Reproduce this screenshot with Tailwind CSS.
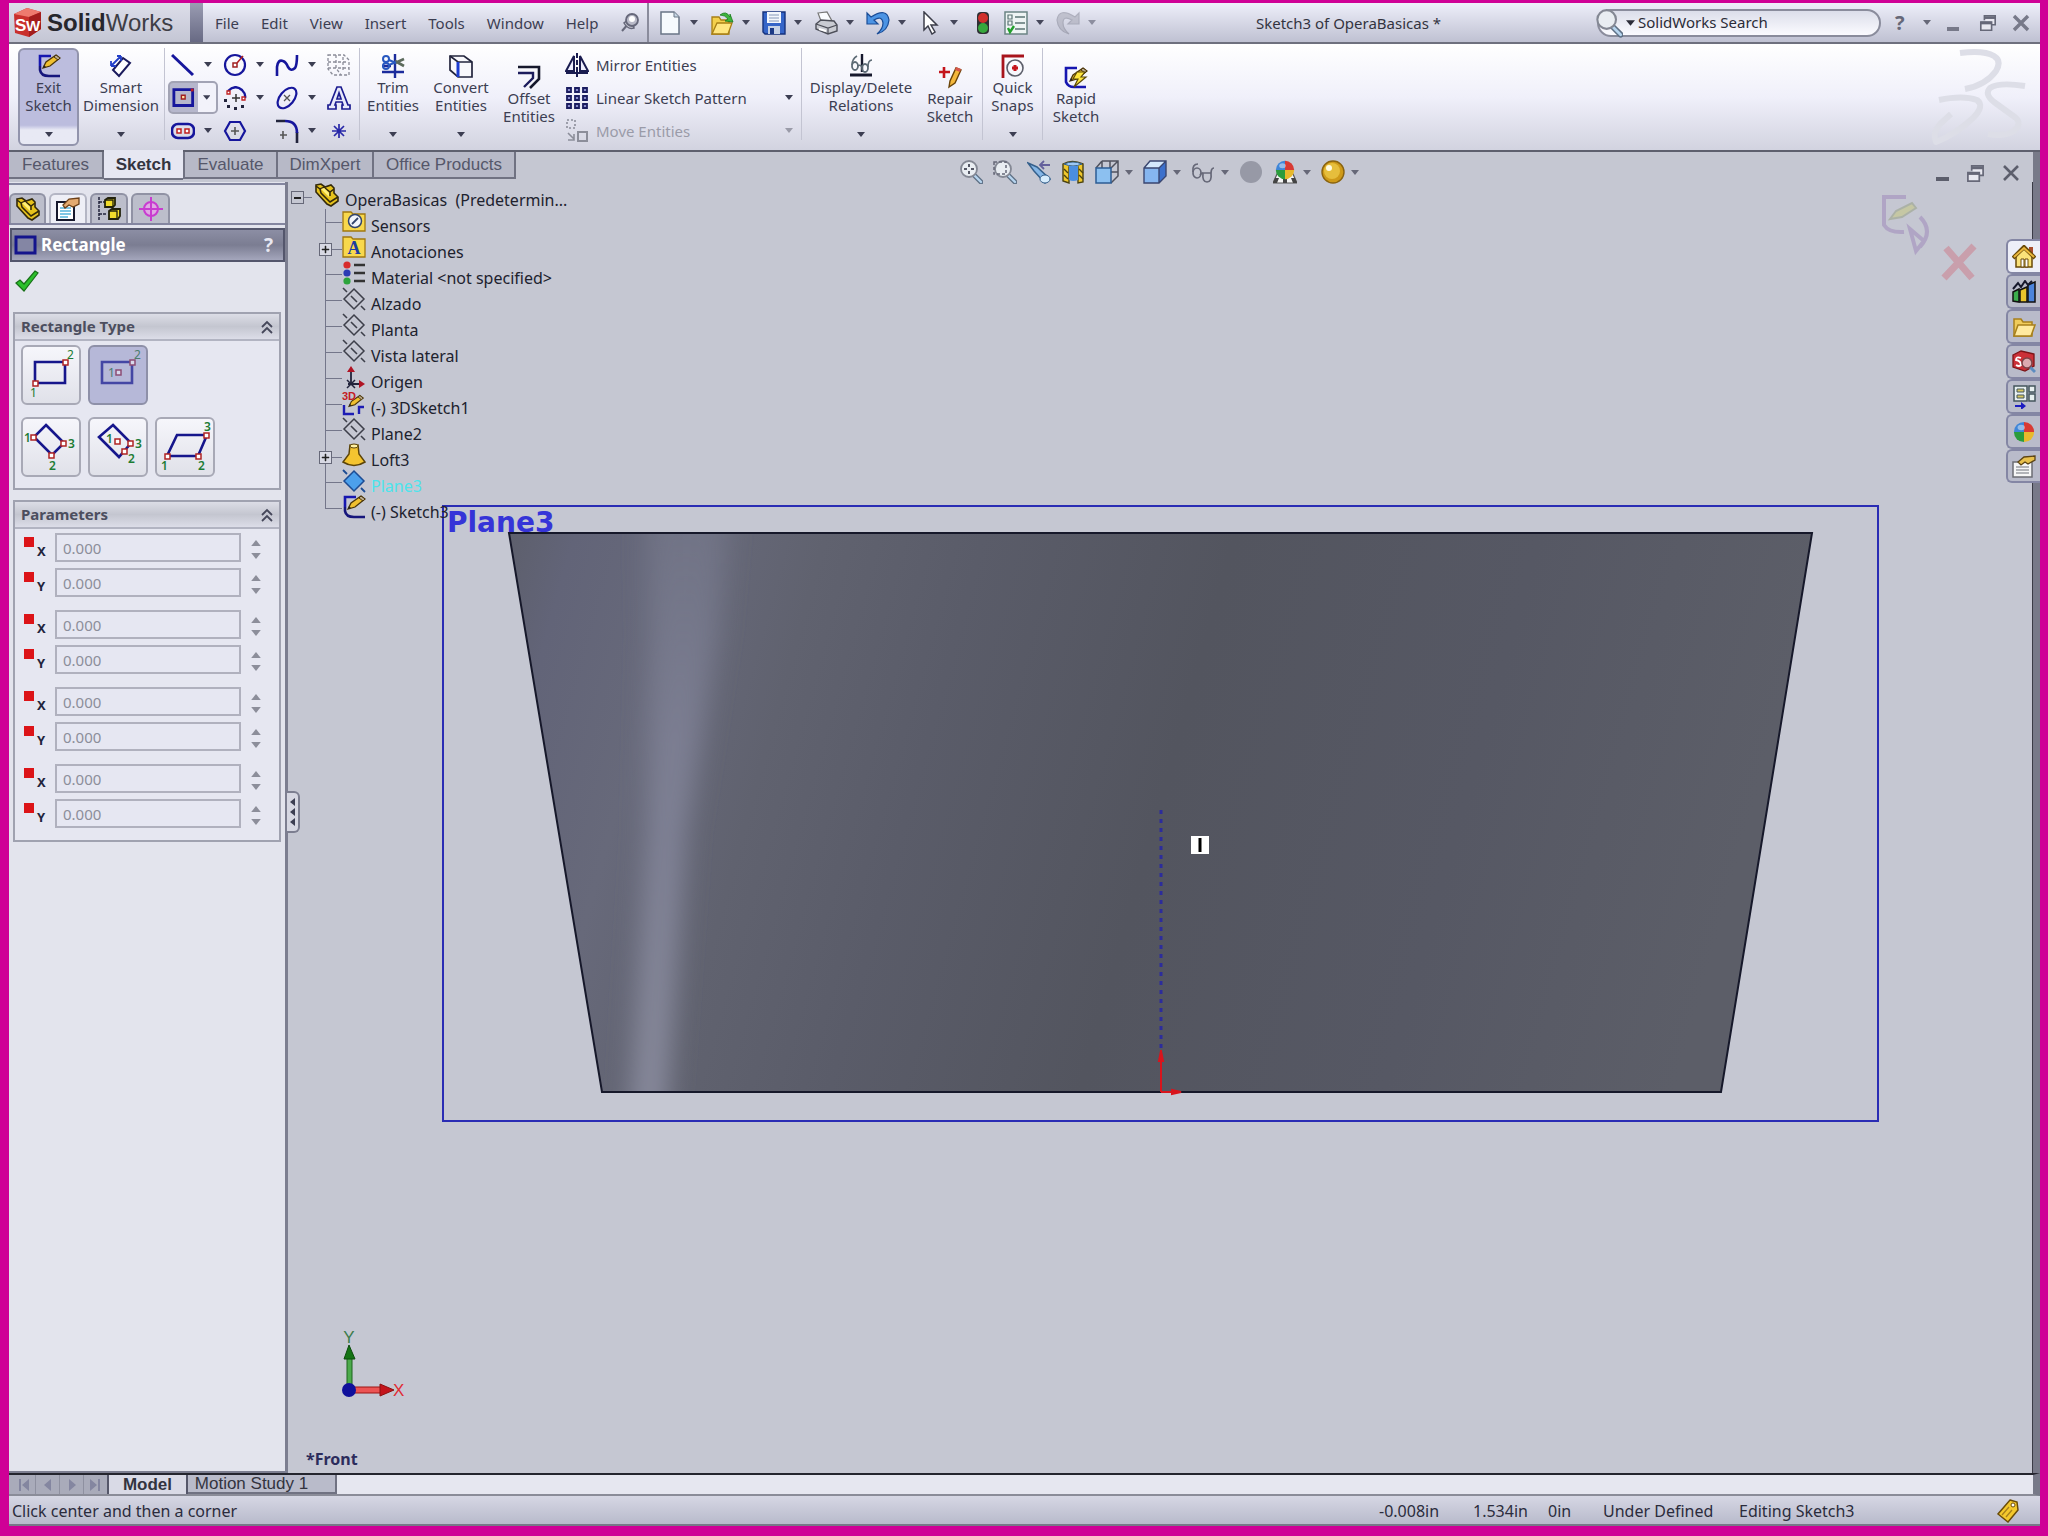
<!DOCTYPE html>
<html lang="en">
<head>
    <meta charset="UTF-8">
    <meta name="viewport" content="width=device-width, initial-scale=1.0">
    <title>SolidWorks - Sketch3 of OperaBasicas</title>
    <script src="https://cdn.jsdelivr.net/npm/@tailwindcss/browser@4"></script>
</head>
<body class="h-screen flex flex-col overflow-hidden bg-[#cf0096] pt-[3px] pl-[9px] pr-2 pb-[10px] font-['Noto_Sans',sans-serif] text-[15px] text-[#3c3e52] whitespace-nowrap">

    <!-- Shared symbols -->
    <svg class="hidden">
        <symbol id="arrow" viewBox="0 0 8 5"><path d="M0 0h8L4 5z" fill="currentColor"/></symbol>
        <symbol id="pencil" viewBox="0 0 24 24"><path d="M6 16l3-6L19 3l4 3-10 8z" fill="#f0c030" stroke="#4a3508" stroke-width="1.3"/><path d="M17 5l2-2 4 3-2 2z" fill="#b9a98e" stroke="#4a3508"/><path d="M6 16l1-3 2 2z" fill="#222"/></symbol>
        <symbol id="sketch" viewBox="0 0 24 24"><path d="M14 2H3v10" fill="none" stroke="#1616b0" stroke-width="2.6"/><path d="M3 12v4q1 6 9 6h11" fill="none" stroke="#16167c" stroke-width="2.6"/><use href="#pencil" y="-2"/></symbol>
        <symbol id="part" viewBox="0 0 24 24"><path d="M1 2l5-1 4 3 6-2 3 3v5l4 4v4l-7 5-4-2L1 9z" fill="#e6c21c" stroke="#33290a" stroke-width="1.6"/><path d="M1 3l4 3 5-2M5 6l1 4 9 9 8-5M10 5l5 4 4-3M15 9v4" fill="none" stroke="#33290a" stroke-width="1.5"/><path d="M6 6l3-1 5 5v4z" fill="#fff07a"/></symbol>
        <symbol id="plane" viewBox="0 0 24 24"><path d="M12 2l10 10-10 10L2 12z" fill="none" stroke="#3d3f4a" stroke-width="1.5"/><path d="M1 1l4 4M9 9l6 6M19 19l4 4" stroke="#3d3f4a" stroke-width="1.6"/></symbol>
        <symbol id="chevrons" viewBox="0 0 12 14"><path d="M1 7l5-5 5 5M1 13l5-5 5 5" fill="none" stroke="#45475a" stroke-width="1.8"/></symbol>
        <symbol id="lens" viewBox="0 0 24 24"><path d="M15 15l7 7" stroke="#5e7085" stroke-width="5" stroke-linecap="round"/><path d="M15 15l7 7" stroke="#b6d4ee" stroke-width="2.4" stroke-linecap="round"/><circle cx="10" cy="9" r="8" fill="#e9edf2" stroke="#848894" stroke-width="1.8"/></symbol>
        <symbol id="restore" viewBox="0 0 20 20"><path d="M6 7V2h12v10h-4" fill="#e8e8f0" stroke="#666878" stroke-width="1.8"/><path d="M6 4h12" stroke="#666878" stroke-width="3"/><path d="M2 9h12v9H2z" fill="#e8e8f0" stroke="#666878" stroke-width="1.8"/><path d="M2 10h12" stroke="#666878" stroke-width="3"/></symbol>
        <symbol id="ball" viewBox="0 0 24 24"><path d="M12 12V1A11 11 0 0 0 1 12z" fill="#3f86d8"/><path d="M12 12h11A11 11 0 0 0 12 1z" fill="#d83a34"/><path d="M12 12H1a11 11 0 0 0 11 11z" fill="#2b9c3c"/><path d="M12 12v11a11 11 0 0 0 11-11z" fill="#e8b92c"/><ellipse cx="9" cy="7" rx="4" ry="3" fill="#fff" opacity=".45"/></symbol>
    </svg>

    <!-- Title bar -->
    <header class="h-[41px] shrink-0 flex items-center border-b-2 border-[#6e707e] bg-linear-to-b from-[#eeeffa] to-[#bfc1d2]">
        <div class="w-[181px] h-full flex items-center gap-1 pl-[3px] bg-linear-to-b from-[#dddeea] to-[#c4c6d4]">
            <svg class="size-[31px]" viewBox="0 0 31 31">
                <path d="M2 7l13-6 14 4v17l-12 8-14-4z" fill="#c9302c"/><path d="M2 7l13-6 14 4-12 5z" fill="#ee7a6e"/><path d="M17 10l12-5v17l-12 8z" fill="#a31d1d"/>
                <text x="3" y="24" font-family="Liberation Sans" font-weight="700" font-size="17" fill="#fff">S</text><text x="14" y="24" font-family="Liberation Sans" font-weight="700" font-size="15" fill="#fff">W</text>
            </svg>
            <h1 class="font-['Liberation_Sans',sans-serif] text-[24px] leading-7 text-[#3e3e46]"><b class="text-[#26262c]">Solid</b>Works</h1>
        </div>
        <div class="w-[13px] h-full bg-linear-to-b from-[#9a9cb2] to-[#686a84]"></div>
        <nav class="h-full w-[446px] flex items-center gap-[22px] pl-3 pt-px border-r-2 border-[#8a8c9c]">
            <button>File</button>
            <button>Edit</button>
            <button>View</button>
            <button>Insert</button>
            <button>Tools</button>
            <button>Window</button>
            <button>Help</button>
            <button aria-label="Pin menu"><svg class="size-5" viewBox="0 0 20 20"><path d="M9 10L2 18" stroke="#66687a" stroke-width="2"/><path d="M4 10q4 7 10 5l-1-4-5-4z" fill="#cfd0da" stroke="#66687a" stroke-width="1.5"/><circle cx="12" cy="7" r="6" fill="#b9bac8" stroke="#66687a" stroke-width="1.8"/><circle cx="12" cy="6" r="3" fill="#fff"/></svg></button>
        </nav>

        <!-- Quick access -->
        <div class="flex items-center pl-[9px] text-[#45475a]">
            <button class="w-[52px] flex items-center gap-2" aria-label="New"><svg class="size-6" viewBox="0 0 24 24"><path d="M3 1h13l5 5v17H3z" fill="#f6fafd" stroke="#6a7686" stroke-width="1.5"/><path d="M16 1v5h5" fill="#c6d6e4" stroke="#6a7686"/></svg><svg class="w-2 h-[5px]"><use href="#arrow"/></svg></button>
            <button class="w-[52px] flex items-center gap-2" aria-label="Open"><svg class="size-6" viewBox="0 0 24 24"><path d="M2 23V6h7l2 3h8v14z" fill="#f4d04c" stroke="#a87f14" stroke-width="1.3"/><path d="M2 23l5-11h15l-4 11z" fill="#ffe680" stroke="#a87f14" stroke-width="1.3"/><path d="M10 4q6-5 10 2V3l3 8-8-1 3-2q-3-4-8-4z" fill="#3cb43c" stroke="#187a1c" stroke-width=".8"/></svg><svg class="w-2 h-[5px]"><use href="#arrow"/></svg></button>
            <button class="w-[52px] flex items-center gap-2" aria-label="Save"><svg class="size-6" viewBox="0 0 24 24"><path d="M1 1h22v22H3l-2-2z" fill="#3565c8" stroke="#16327c" stroke-width="1.4"/><path d="M5 1h14v11H5z" fill="#f3f7fc"/><path d="M7 4h10M7 7h10M7 10h10" stroke="#8698b8"/><path d="M6 15h12v8H6z" fill="#c6d2e6"/><path d="M8 17h4v6H8z" fill="#1c3a86"/></svg><svg class="w-2 h-[5px]"><use href="#arrow"/></svg></button>
            <button class="w-[52px] flex items-center gap-2" aria-label="Print"><svg class="size-6" viewBox="0 0 24 24"><path d="M4 2l9-1 5 9H7z" fill="#fafcff" stroke="#777" stroke-width="1.2"/><path d="M2 13l5-4 13 1 3 4v6l-9 3L2 18z" fill="#c9cbd2" stroke="#4c4e58" stroke-width="1.4"/><path d="M2 13l12 4 9-3M14 17v6" fill="none" stroke="#4c4e58" stroke-width="1.2"/><path d="M5 18l7 2" stroke="#fff" stroke-width="2"/></svg><svg class="w-2 h-[5px]"><use href="#arrow"/></svg></button>
            <button class="w-[52px] flex items-center gap-2" aria-label="Undo"><svg class="size-6" viewBox="0 0 24 24"><path d="M1 2v11h11l-4-4q8-5 9 3 0 6-6 11 11-3 12-14Q21-4 5 6z" fill="#4c94e4" stroke="#1a4c96" stroke-width="1.2"/></svg><svg class="w-2 h-[5px]"><use href="#arrow"/></svg></button>
            <button class="w-[57px] flex items-center gap-2" aria-label="Select"><svg class="size-6" viewBox="0 0 24 24"><path d="M6 1v18l4-4 4 8 3-2-4-7h6z" fill="#fff" stroke="#3c3e4a" stroke-width="1.5"/></svg><svg class="w-2 h-[5px]"><use href="#arrow"/></svg></button>
            <button class="w-[29px]" aria-label="Rebuild"><svg class="w-4 h-6" viewBox="0 0 16 24"><rect x="2" y="1" width="12" height="22" rx="4" fill="#2e3034"/><circle cx="8" cy="7" r="5" fill="#d0302c"/><circle cx="8" cy="17" r="5" fill="#36a83c"/></svg></button>
            <button class="w-[52px] flex items-center gap-2" aria-label="Options"><svg class="size-6" viewBox="0 0 24 24"><path d="M1 1h22v22H1z" fill="#eef4f4" stroke="#6b8484" stroke-width="1.5"/><path d="M4 4h4v4H4zM4 10h4v4H4z" fill="none" stroke="#5c7474" stroke-width="1.2"/><path d="M11 6h10M11 12h10M11 18h10" stroke="#5c7474" stroke-width="1.6"/><path d="M4 17l2 4 4-6" fill="none" stroke="#22a02c" stroke-width="2.4"/></svg><svg class="w-2 h-[5px]"><use href="#arrow"/></svg></button>
            <button class="w-[52px] flex items-center gap-2 opacity-50" aria-label="Redo"><svg class="size-6" viewBox="0 0 24 24"><path d="M23 2v11H12l4-4q-9-5-9 3 0 6 6 11-11-3-12-14Q3-4 19 6z" fill="#a2a3b0" stroke="#7f8190" stroke-width="1.2"/></svg><svg class="w-2 h-[5px]"><use href="#arrow"/></svg></button>
        </div>

        <p class="flex-1 pt-px pr-2 text-center text-[#33343f]">Sketch3 of OperaBasicas *</p>

        <form class="w-[284px] h-[28px] flex items-center gap-[3px] mr-[14px] pl-2 rounded-full border-2 border-[#8a8c9c] bg-linear-to-b from-[#dcdeea] to-[#fbfbff] text-[#2b2c38]">
            <svg class="w-7 h-8 -ml-3"><use href="#lens"/></svg>
            <svg class="w-[9px] h-[6px]"><use href="#arrow"/></svg>
            <input type="text" aria-label="Search" value="SolidWorks Search" class="flex-1 min-w-0 bg-transparent outline-none">
        </form>
        <div class="flex items-center text-[#666878] pr-[10px]">
            <button class="w-[28px] text-left font-bold text-[20px] leading-6">?</button>
            <svg class="w-2 h-[5px] mr-[16px]"><use href="#arrow"/></svg>
            <button class="w-[32px] h-5" aria-label="Minimize"><span class="block w-3 h-[4px] mt-3 bg-[#777989]"></span></button>
            <button class="w-[33px]" aria-label="Restore"><svg class="size-[18px]"><use href="#restore"/></svg></button>
            <button aria-label="Close"><svg class="size-[18px]" viewBox="0 0 18 18"><path d="M2 2l14 14M16 2L2 16" stroke="#777989" stroke-width="3.4"/></svg></button>
        </div>
    </header>

    <!-- Command manager -->
    <section class="h-[108px] shrink-0 flex pt-1 pl-[9px] border-b-2 border-[#5e606e] bg-linear-to-b from-white via-[#f0f0fa] to-[#d2d3e0] text-center leading-[18px]">
        <button class="w-[61px] h-[98px] flex flex-col items-center pt-1 rounded-md border-2 border-[#9294ac] bg-linear-to-b from-[#bcbdde] from-80% to-[#e8e9f4] to-85%">
            <svg class="size-6"><use href="#sketch"/></svg>
            <span class="h-[54px]">Exit<br>Sketch</span>
            <svg class="w-2 h-[5px]"><use href="#arrow"/></svg>
        </button>
        <button class="w-[84px] h-[98px] flex flex-col items-center pt-[6px] mr-px">
            <svg class="size-6" viewBox="0 0 24 24"><path d="M14 4l7 5-11 13-6-6z" fill="#fff" stroke="#1a1a5c" stroke-width="2"/><path d="M2 12L12 2M2 12V7M2 12h5M12 2v5M12 2H8" fill="none" stroke="#2440c8" stroke-width="1.8"/></svg>
            <span class="h-[54px]">Smart<br>Dimension</span>
            <svg class="w-2 h-[5px]"><use href="#arrow"/></svg>
        </button>
        <div class="w-px h-[92px] bg-[#c3c4d2] mr-[3px]"></div>

        <div class="grid grid-cols-[52px_52px_52px_30px] auto-rows-[33px] mr-[5px]">
            <button class="flex items-center" aria-label="Line"><svg class="size-6 mx-[3px]" viewBox="0 0 24 24"><path d="M1 2l21 20" stroke="#16169c" stroke-width="3"/></svg><svg class="w-2 h-[5px] mx-[6px]"><use href="#arrow"/></svg></button>
            <button class="flex items-center" aria-label="Circle"><svg class="size-6 mx-[3px]" viewBox="0 0 24 24"><circle cx="12" cy="12" r="10" fill="none" stroke="#16169c" stroke-width="2.2"/><path d="M10 10h4v4h-4z" fill="#fff" stroke="#a02020" stroke-width="1.5"/><path d="M14 10l6-7" stroke="#b02020" stroke-width="1.5"/></svg><svg class="w-2 h-[5px] mx-[6px]"><use href="#arrow"/></svg></button>
            <button class="flex items-center" aria-label="Spline"><svg class="size-6 mx-[3px]" viewBox="0 0 24 24"><path d="M2 23V14q1-8 6-6 3 1 5 6 3 5 7 1 2-3 2-13" fill="none" stroke="#16169c" stroke-width="2.6"/></svg><svg class="w-2 h-[5px] mx-[6px]"><use href="#arrow"/></svg></button>
            <button class="flex items-center justify-center" aria-label="Plane"><svg class="size-6" viewBox="0 0 24 24"><path d="M1 2h16l5 5v15H6l-5-6zM1 9h19M9 2v13l5 7M16 4v14M1 15h21" fill="none" stroke="#8a8c98" stroke-width="1.3" stroke-dasharray="3 2"/></svg></button>

            <button class="flex items-center rounded-[5px] border-2 border-[#a2a3b4] bg-linear-to-r from-[#b6b7cc] from-60% to-[#f2f2fa] to-60% mr-[2px]" aria-label="Rectangle"><svg class="size-6 mx-[2px]" viewBox="0 0 24 24"><path d="M2 3h20v17H2z" fill="none" stroke="#16169c" stroke-width="3"/><path d="M10 9h4v4h-4z" fill="#ffe0a0" stroke="#a02020" stroke-width="1.5"/><path d="M20 2h3v3h-3z" fill="#c02020"/></svg><svg class="w-2 h-[5px] mx-[6px]"><use href="#arrow"/></svg></button>
            <button class="flex items-center" aria-label="Arc"><svg class="size-6 mx-[3px]" viewBox="0 0 24 24"><path d="M5 5q7-7 14-1 4 4 3 8" fill="none" stroke="#16169c" stroke-width="2.4"/><path d="M4 5h3v3H4zM19 11h3v3h-3z" fill="#fff" stroke="#c02020" stroke-width="1.3"/><path d="M9 12h8M13 8v8" stroke="#333" stroke-width="1.5"/><path d="M1 13h3v3H1zM4 19h3v3H4zM11 21h3v3h-3zM18 19h3v3h-3z" fill="#22243c"/></svg><svg class="w-2 h-[5px] mx-[6px]"><use href="#arrow"/></svg></button>
            <button class="flex items-center" aria-label="Ellipse"><svg class="size-6 mx-[3px]" viewBox="0 0 24 24"><ellipse cx="12" cy="12" rx="12" ry="7" transform="rotate(-50 12 12)" fill="none" stroke="#16169c" stroke-width="2.2"/><path d="M9 9l6 6M15 9l-6 6" stroke="#555" stroke-width="1.3"/></svg><svg class="w-2 h-[5px] mx-[6px]"><use href="#arrow"/></svg></button>
            <button class="flex items-center justify-center" aria-label="Text"><svg class="size-6" viewBox="0 0 24 24"><path d="M10 1h4l7 18h2v4h-8v-4h1l-1-3H9l-1 3h1v4H1v-4h2zM12 7l-2 6h4z" fill="#e9eafa" stroke="#1c1c90" stroke-width="1.7"/></svg></button>

            <button class="flex items-center" aria-label="Slot"><svg class="size-6 mx-[3px]" viewBox="0 0 24 24"><rect x="1" y="5" width="22" height="14" rx="6" fill="none" stroke="#16169c" stroke-width="2.6"/><path d="M6 10h4v4H6zM14 10h4v4h-4z" fill="#fff" stroke="#c02020" stroke-width="1.5"/></svg><svg class="w-2 h-[5px] mx-[6px]"><use href="#arrow"/></svg></button>
            <button class="flex items-center" aria-label="Polygon"><svg class="size-6 mx-[3px]" viewBox="0 0 24 24"><path d="M7 3h10l5 9-5 9H7l-5-9z" fill="none" stroke="#16169c" stroke-width="2.2"/><path d="M8 12h8M12 8v8" stroke="#555" stroke-width="1.6"/></svg></button>
            <button class="flex items-center" aria-label="Fillet"><svg class="size-6 mx-[3px]" viewBox="0 0 24 24"><path d="M1 2h9M22 13v11" stroke="#22243c" stroke-width="2.6"/><path d="M10 2q12 0 12 12" fill="none" stroke="#16169c" stroke-width="2.6"/><path d="M5 16h7M8 12v8" stroke="#555" stroke-width="1.6"/></svg><svg class="w-2 h-[5px] mx-[6px]"><use href="#arrow"/></svg></button>
            <button class="flex items-center justify-center" aria-label="Point"><svg class="size-4" viewBox="0 0 16 16"><path d="M8 1v14M1 8h14M3 3l10 10M13 3L3 13" stroke="#2828a8" stroke-width="1.7"/></svg></button>
        </div>
        <div class="w-px h-[92px] bg-[#c3c4d2]"></div>

        <button class="w-[66px] h-[98px] flex flex-col items-center pt-[6px]">
            <svg class="size-6" viewBox="0 0 24 24"><path d="M14 0v24M1 18h22M1 12h9" stroke="#1c2c9c" stroke-width="2.4"/><path d="M14 9l9-4M14 7l9 5" stroke="#5c6a5c" stroke-width="2.6"/><circle cx="5" cy="5" r="3" fill="none" stroke="#2858c0" stroke-width="2"/><circle cx="5" cy="12" r="3" fill="none" stroke="#2858c0" stroke-width="2"/><path d="M8 6l7 3M8 11l7-3" stroke="#2858c0" stroke-width="2"/></svg>
            <span class="h-[54px]">Trim<br>Entities</span>
            <svg class="w-2 h-[5px]"><use href="#arrow"/></svg>
        </button>
        <button class="w-[70px] h-[98px] flex flex-col items-center pt-[6px]">
            <svg class="size-6" viewBox="0 0 24 24"><path d="M1 2h14l8 6v15H9l-8-7z" fill="#f8f8fc" stroke="#22243c" stroke-width="1.7"/><path d="M1 2l8 6h14" fill="none" stroke="#22243c" stroke-width="1.7"/><path d="M9 8v15" stroke="#1c3cd0" stroke-width="3"/></svg>
            <span class="h-[54px]">Convert<br>Entities</span>
            <svg class="w-2 h-[5px]"><use href="#arrow"/></svg>
        </button>
        <button class="w-[66px] h-[98px] flex flex-col items-center pt-[17px]">
            <svg class="size-6" viewBox="0 0 24 24"><path d="M1 2h21v12l-9 9" fill="none" stroke="#16182c" stroke-width="2.6"/><path d="M1 8h15v5l-9 9" fill="none" stroke="#1c1c5c" stroke-width="2.4"/></svg>
            <span>Offset<br>Entities</span>
        </button>

        <div class="w-[239px] grid auto-rows-[33px] pl-[3px]">
            <button class="flex items-center gap-[7px]"><svg class="size-6" viewBox="0 0 24 24"><path d="M9 3v15H1zM15 3v15h8z" fill="#eef" stroke="#1a1c50" stroke-width="2"/><path d="M12 0v24" stroke="#1a1c50" stroke-width="2" stroke-dasharray="5 2"/><path d="M1 20h22" stroke="#1a1c50" stroke-width="2"/></svg>Mirror Entities</button>
            <button class="flex items-center gap-[7px]"><svg class="size-6" viewBox="0 0 24 24"><path d="M2 2h4v4H2zM10 2h4v4h-4zM18 2h4v4h-4zM2 10h4v4H2zM10 10h4v4h-4zM18 10h4v4h-4zM2 18h4v4H2zM10 18h4v4h-4zM18 18h4v4h-4z" fill="#8a8ccc" stroke="#1a1c60" stroke-width="1.8"/></svg><span class="flex-1 text-left">Linear Sketch Pattern</span><svg class="w-2 h-[5px] mr-2"><use href="#arrow"/></svg></button>
            <button class="flex items-center gap-[7px] text-[#9a9ba8]" disabled><svg class="size-6" viewBox="0 0 24 24"><path d="M2 1h8v8H2z" fill="none" stroke="#8c8e9a" stroke-width="1.6" stroke-dasharray="2 2"/><path d="M13 13h9v9h-9z" fill="none" stroke="#8c8e9a" stroke-width="2"/><path d="M3 14l6 6M9 15v6H3" fill="none" stroke="#8c8e9a" stroke-width="1.6"/></svg><span class="flex-1 text-left">Move Entities</span><svg class="w-2 h-[5px] mr-2"><use href="#arrow"/></svg></button>
        </div>
        <div class="w-px h-[92px] bg-[#c3c4d2]"></div>

        <button class="w-[118px] h-[98px] flex flex-col items-center pt-[6px]">
            <svg class="size-6" viewBox="0 0 24 24"><path d="M13 0v18" stroke="#16182c" stroke-width="2.4"/><path d="M1 21h22" stroke="#16182c" stroke-width="3"/><ellipse cx="6" cy="12" rx="3" ry="4" fill="none" stroke="#5c6a74" stroke-width="1.8"/><ellipse cx="16" cy="14" rx="3" ry="4" fill="none" stroke="#5c6a74" stroke-width="1.8"/><path d="M3 11q0-6 5-9M9 12q2-2 4 1M19 13q0-7 4-7" fill="none" stroke="#5c6a74" stroke-width="1.6"/></svg>
            <span class="h-[54px]">Display/Delete<br>Relations</span>
            <svg class="w-2 h-[5px]"><use href="#arrow"/></svg>
        </button>
        <button class="w-[60px] h-[98px] flex flex-col items-center pt-[17px]">
            <svg class="size-6" viewBox="0 0 24 24"><path d="M1 7h11M6 2v11" stroke="#c4141c" stroke-width="2.6"/><path d="M11 22l1-6L18 3l5 2-6 13z" fill="#f4b83c" stroke="#6a4408" stroke-width="1.4"/><path d="M17 5l1-3 5 2-1 3z" fill="#d8584c"/></svg>
            <span>Repair<br>Sketch</span>
        </button>
        <div class="w-px h-[92px] bg-[#c3c4d2] ml-[2px]"></div>
        <button class="w-[59px] h-[98px] flex flex-col items-center pt-[6px]">
            <svg class="size-6" viewBox="0 0 24 24"><path d="M2 24V2h21" fill="none" stroke="#a8141c" stroke-width="2.8"/><circle cx="14" cy="14" r="8" fill="none" stroke="#5c5e6a" stroke-width="1.6"/><path d="M11 14h6M14 11v6" stroke="#c4141c" stroke-width="3"/></svg>
            <span class="h-[54px]">Quick<br>Snaps</span>
            <svg class="w-2 h-[5px]"><use href="#arrow"/></svg>
        </button>
        <div class="w-px h-[92px] bg-[#c3c4d2]"></div>
        <button class="w-[66px] h-[98px] flex flex-col items-center pt-[17px]">
            <svg class="size-6" viewBox="0 0 24 24"><path d="M13 3H2v14q2 5 8 5h12" fill="none" stroke="#1616b0" stroke-width="2.6"/><use href="#pencil"/><path d="M13 7h8l-4 5h5L10 22l4-8H9z" fill="#ffe63c" stroke="#5c4a08" stroke-width="1.2"/></svg>
            <span>Rapid<br>Sketch</span>
        </button>
        <svg class="w-[100px] h-[100px] ml-auto mr-[12px]" viewBox="0 0 100 100" fill="none" stroke="#dddee7" stroke-width="6" stroke-linejoin="round">
            <path d="M32 5q24-3 34 3 8 5 2 15-10 14-31 18"/><path d="M11 52q24-5 38 0 8 6-4 18Q28 86 8 94q-4-8 4-18l11-10"/><path d="M97 38q-26-4-35 2-6 6 4 14l22 16q6 6-2 13-10 6-26 3"/>
        </svg>
    </section>

    <!-- Command tabs and heads-up view toolbar -->
    <section class="h-[30px] shrink-0 flex items-start relative z-20 border-r-[7px] border-[#777988] bg-[#c5c7d2]">
        <nav class="flex font-['Liberation_Sans',sans-serif] text-[17px] leading-[25px] text-[#55576a]">
            <button class="w-[95px] h-[27px] border-r-2 border-b-2 border-[#707282] bg-[#b7b9c7]">Features</button>
            <button class="w-[79px] h-[30px] -mt-[2px] border-b-2 border-[#707282] bg-[#e6e7f2] font-bold text-[#33343f]">Sketch</button>
            <button class="w-[95px] h-[27px] border-x-2 border-b-2 border-[#707282] bg-[#b7b9c7]">Evaluate</button>
            <button class="w-[96px] h-[27px] border-r-2 border-b-2 border-[#707282] bg-[#b7b9c7]">DimXpert</button>
            <button class="w-[142px] h-[27px] border-r-2 border-b-2 border-[#707282] bg-[#b7b9c7]">Office Products</button>
        </nav>
        <div class="flex-1 flex items-center justify-center gap-[10px] pt-2 pr-[134px] text-[#666878]">
            <button aria-label="Zoom to fit"><svg class="size-6" viewBox="0 0 24 24"><use href="#lens"/><path d="M10 4v10M5 9h10" stroke="#555866" stroke-width="2" stroke-dasharray="3 4"/></svg></button>
            <button aria-label="Zoom to area"><svg class="size-6" viewBox="0 0 24 24"><use href="#lens"/><path d="M1 2h12v12H1z" fill="none" stroke="#666878" stroke-width="1.5" stroke-dasharray="3 2"/></svg></button>
            <button aria-label="Previous view"><svg class="size-6" viewBox="0 0 24 24"><path d="M1 3l9 4 13 12-5 4L7 11z" fill="#84b6e6" stroke="#35608c" stroke-width="1.5"/><ellipse cx="18" cy="19" rx="5" ry="4" fill="#d6ecfc" stroke="#35608c"/><path d="M23 5h-9M17 1l-4 4 4 4" fill="none" stroke="#64609c" stroke-width="1.8"/></svg></button>
            <button aria-label="Section view"><svg class="size-6" viewBox="0 0 24 24"><path d="M2 4q9-5 20 0v18l-5 1V7H8v16l-6-2z" fill="#f0c82c" stroke="#4a4210" stroke-width="1.4"/><path d="M3 4q9-4 18 0-9 4-18 0z" fill="#9cc8f4" stroke="#35608c"/><path d="M8 6h9v14q-5 2-9 0z" fill="#4a8ee0"/><path d="M3 9l4 4M3 15l4 4M18 9l4 4M18 15l4 4" stroke="#4a4210" stroke-width="1.4"/></svg></button>
            <button class="flex items-center gap-[6px]" aria-label="View orientation"><svg class="size-6" viewBox="0 0 24 24"><path d="M7 1h16v15l-7 7M7 1L1 8M23 1l-7 7M15 1v7M7 1v7M16 12h7" fill="none" stroke="#50525e" stroke-width="1.5"/><path d="M1 8h15v15H1z" fill="#8cc0f0" stroke="#2c5c94" stroke-width="1.5"/></svg><svg class="w-2 h-[5px]"><use href="#arrow"/></svg></button>
            <button class="flex items-center gap-[6px]" aria-label="Display style"><svg class="size-6" viewBox="0 0 24 24"><path d="M1 8l6-7h16l-7 7z" fill="#d4e8fc"/><path d="M1 8h15v15H1z" fill="#86b6f0"/><path d="M16 8l7-7v15l-7 7z" fill="#3c70cc"/><path d="M1 8l6-7h16v15l-7 7H1zM1 8h15v15M16 8l7-7" fill="none" stroke="#3a4670" stroke-width="1.4"/></svg><svg class="w-2 h-[5px]"><use href="#arrow"/></svg></button>
            <button class="flex items-center gap-[6px]" aria-label="Hide/show items"><svg class="size-6" viewBox="0 0 24 24" fill="none" stroke="#666878" stroke-width="1.7"><ellipse cx="6" cy="13" rx="4" ry="5"/><path d="M12 13h8q1 9-4 9t-4-9zM2 12q-1-8 5-8M9 15q2-3 3-1M20 14q0-6 3-6"/></svg><svg class="w-2 h-[5px]"><use href="#arrow"/></svg></button>
            <button aria-label="Shadows"><svg class="size-6" viewBox="0 0 24 24"><circle cx="12" cy="12" r="11" fill="#9799a6"/></svg></button>
            <button class="flex items-center gap-[6px]" aria-label="Apply scene"><svg class="size-6" viewBox="0 0 24 24"><path d="M4 14h16l4 9H0z" fill="#f4f4f4" stroke="#555" stroke-width="1.2"/><path d="M2 18h4l-2 5H0zM10 18h4v5h-4zM18 18h4l2 5h-4z" fill="#444"/><svg x="2" y="0" width="20" height="20"><use href="#ball"/></svg></svg><svg class="w-2 h-[5px]"><use href="#arrow"/></svg></button>
            <button class="flex items-center gap-[6px]" aria-label="Appearance"><svg class="size-6" viewBox="0 0 24 24"><circle cx="12" cy="12" r="11" fill="#cf9a18" stroke="#8a6410" stroke-width="1.4"/><circle cx="11" cy="11" r="8" fill="#e6be3c"/><circle cx="8" cy="8" r="3" fill="#fffbe0"/></svg><svg class="w-2 h-[5px]"><use href="#arrow"/></svg></button>
        </div>
        <div class="flex items-center pt-[11px] pr-[13px]">
            <button class="w-[30px] h-5" aria-label="Minimize document"><span class="block w-[13px] h-[4px] mt-3 bg-[#5c5e6c]"></span></button>
            <button class="w-[36px]" aria-label="Restore document"><svg class="size-[19px]"><use href="#restore"/></svg></button>
            <button aria-label="Close document"><svg class="size-[18px]" viewBox="0 0 18 18"><path d="M2 2l14 14M16 2L2 16" stroke="#5c5e6c" stroke-width="2.600"/></svg></button>
        </div>
    </section>

    <main class="flex-1 min-h-0 flex">
        <!-- Property manager -->
        <aside class="w-[279px] shrink-0 relative z-10 flex flex-col border-r-[3px] border-b-2 border-[#7c7e90] bg-[#e3e4ed]">
            <nav class="h-[42px] flex items-end gap-[3px] mt-px border-t-2 border-b-2 border-[#8486a0]">
                <button class="w-[37px] h-[30px] grid place-items-center rounded-t-md border-2 border-b-0 border-[#9092a4] bg-[#bcbecb]" aria-label="Feature tree"><svg class="size-6"><use href="#part"/></svg></button>
                <button class="w-[38px] h-[30px] grid place-items-center rounded-t-md border-2 border-b-0 border-[#b4b6c4] bg-[#eeeff6]" aria-label="Properties"><svg class="size-6" viewBox="0 0 24 24"><path d="M1 5h17v18H1z" fill="#fff" stroke="#16182c" stroke-width="2"/><path d="M4 11h11M4 14h11M4 17h11M4 20h8" stroke="#56b4dc" stroke-width="1.4"/><path d="M7 8l6-6 10-1v6l-6 3-4-2-4 3z" fill="#e4aa70" stroke="#6c4018" stroke-width="1.3"/></svg></button>
                <button class="w-[38px] h-[30px] grid place-items-center rounded-t-md border-2 border-b-0 border-[#9092a4] bg-[#bcbecb]" aria-label="Configurations"><svg class="size-6" viewBox="0 0 24 24"><path d="M2 0v24M2 5h6M2 17h8" stroke="#22243c" stroke-width="1.5" stroke-dasharray="3 1"/><path d="M8 3l3-2h7v7l-2 2H8zM12 14l3-2h8v7l-2 3h-9z" fill="#f2dc2c" stroke="#22220c" stroke-width="1.8"/><path d="M8 3h8v7M12 14h8v8" fill="none" stroke="#22220c" stroke-width="1.3"/></svg></button>
                <button class="w-[39px] h-[30px] grid place-items-center rounded-t-md border-2 border-b-0 border-[#9092a4] bg-[#bcbecb]" aria-label="DimXpert"><svg class="size-6" viewBox="0 0 24 24"><circle cx="12" cy="12" r="7" fill="#e0a8e4" stroke="#c83cd0" stroke-width="2"/><path d="M12 0v24M0 12h24" stroke="#c83cd0" stroke-width="2"/></svg></button>
            </nav>
            <header class="h-[34px] mt-[3px] ml-px flex items-center pl-[2px] pr-[10px] border-2 border-[#54566c] bg-linear-to-b from-[#8c8ea4] via-[#7b7d92] to-[#a4a6bc] text-white font-bold">
                <svg class="w-[23px] h-[20px] mr-1" viewBox="0 0 23 20"><path d="M2 2h19v16H2z" fill="#8486a4" stroke="#14148c" stroke-width="3"/></svg>
                <h2 class="flex-1 text-[17px] leading-6">Rectangle</h2>
                <button class="text-[19px] leading-6 text-[#e8e8f2]">?</button>
            </header>
            <button class="w-6 ml-[6px] mt-[7px]" aria-label="OK"><svg class="size-6" viewBox="0 0 24 24"><path d="M1 14l4-3 4 4L20 2l3 2L9 22z" fill="#2cc02c" stroke="#187018" stroke-width="1.2"/></svg></button>

            <section class="mt-[19px] mx-1 h-[178px] border-2 border-[#a0a2b0] bg-[#e6e7f1]">
                <h3 class="h-[27px] flex items-center justify-between pl-[6px] pr-[6px] border-b-2 border-[#b2b4c2] bg-linear-to-b from-[#dcdde6] via-[#c4c6d0] to-[#dcdde8] font-bold text-[#4c4e5e]">Rectangle Type<svg class="w-3 h-[14px]"><use href="#chevrons"/></svg></h3>
                <div class="grid grid-cols-[60px_60px_60px] auto-rows-[60px] gap-x-[7px] gap-y-3 pt-1 pl-[6px]">
                    <button class="rounded-md border-2 border-[#a8a9b6] bg-linear-to-b from-[#f6f6fb] to-[#e0e1e9]" aria-label="Corner rectangle"><svg class="size-14 overflow-visible" viewBox="0 0 56 56" font-size="12" fill="#1c7c34"><path d="M12 15h30v21H12z" fill="none" stroke="#16168c" stroke-width="2.600"/><path d="M10 34h5v5h-5zM40 13h5v5h-5z" fill="#fff" stroke="#b02424" stroke-width="1.500"/><text x="7" y="50">1</text><text x="44" y="12">2</text></svg></button>
                    <button class="rounded-md border-2 border-[#8e90a8] bg-[#b6b8d8]" aria-label="Center rectangle"><svg class="size-14 overflow-visible" viewBox="0 0 56 56" font-size="12" fill="#4c7c6c"><path d="M12 15h30v21H12z" fill="none" stroke="#4446a4" stroke-width="2.600"/><path d="M26 23h5v5h-5zM40 13h5v5h-5z" fill="#d8d8ec" stroke="#8c4c74" stroke-width="1.500"/><text x="18" y="30">1</text><text x="44" y="12">2</text></svg></button>
                    <button class="col-start-1 rounded-md border-2 border-[#a8a9b6] bg-linear-to-b from-[#f6f6fb] to-[#e0e1e9]" aria-label="3 point corner rectangle"><svg class="size-14 overflow-visible" viewBox="0 0 56 56" font-size="12" fill="#1c7c34" font-weight="600"><path d="M23 6l18 18-12 12L11 18z" fill="none" stroke="#16168c" stroke-width="2.600"/><path d="M8 16h5v5H8zM38 22h5v5h-5zM26 34h5v5h-5z" fill="#fff" stroke="#b02424" stroke-width="1.500"/><text x="1" y="23">1</text><text x="45" y="29">3</text><text x="26" y="51">2</text></svg></button>
                    <button class="rounded-md border-2 border-[#a8a9b6] bg-linear-to-b from-[#f6f6fb] to-[#e0e1e9]" aria-label="3 point center rectangle"><svg class="size-14 overflow-visible" viewBox="0 0 56 56" font-size="12" fill="#1c7c34" font-weight="600"><path d="M23 6l18 18-12 14L9 18z" fill="none" stroke="#16168c" stroke-width="2.600"/><path d="M25 20h5v5h-5zM38 22h5v5h-5zM32 30h5v5h-5z" fill="#fff" stroke="#b02424" stroke-width="1.500"/><text x="16" y="24">1</text><text x="45" y="29">3</text><text x="38" y="44">2</text></svg></button>
                    <button class="rounded-md border-2 border-[#a8a9b6] bg-linear-to-b from-[#f6f6fb] to-[#e0e1e9]" aria-label="Parallelogram"><svg class="size-14 overflow-visible" viewBox="0 0 56 56" font-size="12" fill="#1c7c34" font-weight="600"><path d="M20 16h30L41 37H10z" fill="none" stroke="#16168c" stroke-width="2.600"/><path d="M8 35h5v5H8zM39 35h5v5h-5zM47 14h5v5h-5z" fill="#fff" stroke="#b02424" stroke-width="1.500"/><text x="4" y="51">1</text><text x="41" y="51">2</text><text x="47" y="12">3</text></svg></button>
                </div>
            </section>

            <section class="mt-[10px] mx-1 h-[342px] border-2 border-[#a0a2b0] bg-[#e6e7f1]">
                <h3 class="h-[27px] flex items-center justify-between pl-[6px] pr-[6px] border-b-2 border-[#b2b4c2] bg-linear-to-b from-[#dcdde6] via-[#c4c6d0] to-[#dcdde8] font-bold text-[#4c4e5e]">Parameters<svg class="w-3 h-[14px]"><use href="#chevrons"/></svg></h3>
                <div id="params" class="flex flex-col gap-[13px] pt-1 pl-[7px]"></div>
            </section>

            <button class="absolute -right-[15px] top-[609px] w-[13px] h-[42px] flex flex-col items-center justify-around py-1 rounded-r-md border-2 border-l-0 border-[#7c7e90] bg-[#d6d7e2]" aria-label="Collapse panel">
                <svg class="w-[5px] h-2" viewBox="0 0 5 8"><path d="M5 0v8L0 4z" fill="#3c3e52"/></svg>
                <svg class="w-[5px] h-2" viewBox="0 0 5 8"><path d="M5 0v8L0 4z" fill="#3c3e52"/></svg>
                <svg class="w-[5px] h-2" viewBox="0 0 5 8"><path d="M5 0v8L0 4z" fill="#3c3e52"/></svg>
            </button>
        </aside>

        <!-- Graphics area -->
        <section class="flex-1 min-w-0 relative bg-[#c5c7d2] border-r border-[#3a3b46]">
            <svg class="absolute inset-0 w-full h-full" viewBox="-2 -1 1744 1291" preserveAspectRatio="xMinYMin meet">
                <defs>
                    <linearGradient id="body" x2="1" y2=".12"><stop offset="0" stop-color="#5d5f6c"/><stop offset=".05" stop-color="#626478"/><stop offset=".14" stop-color="#67697a"/><stop offset=".24" stop-color="#60626f"/><stop offset=".36" stop-color="#5a5c69"/><stop offset=".55" stop-color="#53555f"/><stop offset=".78" stop-color="#565864"/><stop offset="1" stop-color="#5c5e68"/></linearGradient>
                    <linearGradient id="glow" x2="0" y2="1"><stop offset="0" stop-color="#76798c" stop-opacity=".6"/><stop offset=".4" stop-color="#7c7e92"/><stop offset="1" stop-color="#888a9c"/></linearGradient>
                    <filter id="soft" x="-60%" width="220%"><feGaussianBlur stdDeviation="13 6"/></filter>
                    <clipPath id="solid"><path d="M219 350H1522L1431 909H312z"/></clipPath>
                </defs>
                <rect x="153" y="323" width="1435" height="615" fill="none" stroke="#2a2cb4" stroke-width="2"/>
                <g clip-path="url(#solid)">
                    <path d="M219 350H1522L1431 909H312z" fill="url(#body)"/>
                    <path d="M356 320h84l-12 130-32 200-20 280h-36l16-280 4-200z" fill="url(#glow)" filter="url(#soft)"/>
                </g>
                <path d="M219 350H1522L1431 909H312z" fill="none" stroke="#16182a" stroke-width="2"/>
                <path d="M871 627v238" stroke="#2c2c9c" stroke-width="3" stroke-dasharray="4 5"/>
                <path d="M871 909v-42M871 909h18M869 878l2-10 2 10zM882 907l9 2-9 2z" stroke="#d8141c" stroke-width="2" fill="#d8141c"/>
                <rect x="901" y="653" width="18" height="18" fill="#fff"/><path d="M910 655v14" stroke="#000" stroke-width="3"/>
                <text x="157" y="349" font-family="DejaVu Sans" font-weight="700" font-size="28" fill="#3634d8">Plane3</text>

                <path d="M57 1202v-32h5v32z" fill="#4caa4c" stroke="#1c641c"/><path d="M54 1176l5-14 6 14z" fill="#147414" stroke="#0c4c0c"/>
                <path d="M64 1204h28v6H64z" fill="#ec5454" stroke="#9c1414"/><path d="M90 1201l14 6-14 6z" fill="#c4141c" stroke="#8c1010"/>
                <circle cx="59" cy="1207" r="7" fill="#10109c"/>
                <text x="59" y="1160" text-anchor="middle" font-family="Liberation Sans" font-size="17" fill="#3c7c4c">Y</text>
                <text x="103" y="1213" font-family="Liberation Sans" font-size="17" fill="#e02c34">X</text>

                <g opacity=".28" fill="none" stroke="#7c50a4" stroke-width="4"><path d="M1616 14h-22v28q5 8 20 7"/><path d="M1600 36l6-8 16-8 4 5-14 9z" fill="#c8c830" stroke="#6c7c3c" stroke-width="2"/><path d="M1630 34q14 14 0 30M1620 46l6 22 8-10z"/></g>
                <path d="M1656 65l26 30M1684 63l-30 32" stroke="#d06474" stroke-width="7" opacity=".4"/>
            </svg>

            <!-- Feature tree -->
            <ul class="relative w-[300px] pt-[5px] text-[16px] leading-[26px] text-[#20222e]">
                <li class="flex h-[26px] pl-[3px]"><button class="size-[13px] mt-[4px] border border-[#666878] grid place-items-center" aria-label="Collapse"><span class="w-[7px] h-[2px] bg-[#222]"></span></button><span class="w-2 h-px mt-[10px] bg-[#74768a]"></span><svg class="size-6 -mt-1 ml-[3px] mr-[6px]"><use href="#part"/></svg>OperaBasicas&nbsp; (Predetermin...</li>
                <li>
                    <ul id="tree" class="relative before:absolute before:left-[37px] before:-top-1 before:h-[300px] before:w-px before:bg-[#74768a]">
                        <li class="flex h-[26px]" data-icon="sensor">Sensors</li>
                        <li class="flex h-[26px]" data-icon="notes" data-plus>Anotaciones</li>
                        <li class="flex h-[26px]" data-icon="material">Material &lt;not specified&gt;</li>
                        <li class="flex h-[26px]" data-icon="plane">Alzado</li>
                        <li class="flex h-[26px]" data-icon="plane">Planta</li>
                        <li class="flex h-[26px]" data-icon="plane">Vista lateral</li>
                        <li class="flex h-[26px]" data-icon="origin">Origen</li>
                        <li class="flex h-[26px]" data-icon="sketch3d">(-) 3DSketch1</li>
                        <li class="flex h-[26px]" data-icon="plane">Plane2</li>
                        <li class="flex h-[26px]" data-icon="loft" data-plus>Loft3</li>
                        <li class="flex h-[26px] text-[#4ce4ec]" data-icon="planeblue">Plane3</li>
                        <li class="flex h-[26px]" data-icon="sketch">(-) Sketch3</li>
                    </ul>
                </li>
            </ul>
            <p class="absolute left-[18px] bottom-[2px] font-bold text-[16px] leading-6 text-[#2c2c5c]">*Front</p>

            <!-- Task pane tabs -->
            <nav class="absolute -right-[8px] top-[57px] flex flex-col">
                <button class="w-[34px] h-[35px] grid place-items-center rounded-l-md border-2 border-r-0 border-[#8486a4] bg-[#eeeff8]" aria-label="Resources"><svg class="size-6" viewBox="0 0 24 24"><path d="M17 2h4v8h-4z" fill="#a84c2c"/><path d="M4 11v11h16V11l-8-7z" fill="#fbe27a" stroke="#6a4a08" stroke-width="1.500"/><path d="M1 13L12 2l11 11" fill="none" stroke="#6a4a08" stroke-width="4"/><path d="M2 12L12 3l10 9" fill="none" stroke="#ecb83c" stroke-width="2"/><path d="M9 14h3v8H9zM13 14h3v8h-3z" fill="#fff" stroke="#6a4a08"/></svg></button>
                <button class="w-[34px] h-[35px] grid place-items-center rounded-l-md border-2 border-r-0 border-[#8486a4] bg-[#b9bbca]" aria-label="Design library"><svg class="size-6" viewBox="0 0 24 24"><path d="M1 12l6-3v13l-6-1z" fill="#3cae4c" stroke="#111" stroke-width="1.500"/><path d="M8 10l7-3v15H8z" fill="#e8c42c" stroke="#111" stroke-width="1.500"/><path d="M16 5l7-3v20h-7z" fill="#4c84dc" stroke="#111" stroke-width="1.500"/><path d="M1 9l5-6 3 4 4-6 3 4 4-4" fill="none" stroke="#16182c" stroke-width="2"/></svg></button>
                <button class="w-[34px] h-[35px] grid place-items-center rounded-l-md border-2 border-r-0 border-[#8486a4] bg-[#b9bbca]" aria-label="File explorer"><svg class="size-6" viewBox="0 0 24 24"><path d="M2 21V4h7l2 3h9v14z" fill="#f0cc5c" stroke="#a8801c" stroke-width="1.500"/><path d="M2 21l4-11h17l-4 11z" fill="#ffeaa0" stroke="#a8801c" stroke-width="1.500"/></svg></button>
                <button class="w-[34px] h-[35px] grid place-items-center rounded-l-md border-2 border-r-0 border-[#8486a4] bg-[#b9bbca]" aria-label="Search"><svg class="size-6" viewBox="0 0 24 24"><path d="M1 5l8-4 13 3v12l-9 5-12-4z" fill="#cc3038" stroke="#7c1418" stroke-width="1.300"/><path d="M9 8q-5-2-5 2 5 1 5 5-2 2-5 0" fill="none" stroke="#fff" stroke-width="1.800"/><path d="M18 17l5 5" stroke="#5c8cc0" stroke-width="3"/><circle cx="15" cy="13" r="5" fill="#dcaab0" stroke="#7c4448" stroke-width="1.500"/></svg></button>
                <button class="w-[34px] h-[35px] grid place-items-center rounded-l-md border-2 border-r-0 border-[#8486a4] bg-[#b9bbca]" aria-label="View palette"><svg class="size-6" viewBox="0 0 24 24"><path d="M2 1h13v15H2zM17 1h6v6h-6zM17 9h6v7h-6z" fill="#e8f0f0" stroke="#44565c" stroke-width="1.500"/><path d="M5 4h7v3H5zM5 10h7v3H5z" fill="#d8c860" stroke="#44565c"/><path d="M3 20h6v-3l5 4-5 4v-3H3z" fill="#1c1cc0"/></svg></button>
                <button class="w-[34px] h-[35px] grid place-items-center rounded-l-md border-2 border-r-0 border-[#8486a4] bg-[#b9bbca]" aria-label="Appearances"><svg class="size-[22px]"><use href="#ball"/></svg></button>
                <button class="w-[34px] h-[34px] grid place-items-center rounded-l-md border-2 border-r-0 border-[#8486a4] bg-[#b9bbca]" aria-label="Custom properties"><svg class="size-6" viewBox="0 0 24 24"><path d="M1 8h19v15H1z" fill="#f6f6f6" stroke="#6c6e74" stroke-width="1.500"/><path d="M4 13h13M4 16h13M4 19h13" stroke="#9c9ea4" stroke-width="1.300"/><path d="M6 8l6-5 11-1v4l-7 4-3-2-4 3z" fill="#e8c04c" stroke="#5c4414" stroke-width="1.300"/></svg></button>
            </nav>
        </section>
        <div class="w-[7px] bg-[#777988]"></div>
    </main>

    <!-- Document tabs -->
    <nav class="h-[23px] shrink-0 flex border-t-2 border-t-[#24252e] border-b-2 border-b-[#8a8c98] border-r-[7px] border-r-[#777988] bg-[#e6e7f0] font-['Liberation_Sans',sans-serif] text-[17px] leading-[18px] text-[#33343f]">
        <div class="flex w-[98px] pl-[3px] bg-[#a9abba]">
            <button class="w-[24px] grid place-items-center border-r border-[#8e90a0]" aria-label="First"><svg class="size-3" viewBox="0 0 12 12"><path d="M1 0h2v12H1zM11 0v12L4 6z" fill="#8486a0"/></svg></button>
            <button class="w-[24px] grid place-items-center border-r border-[#8e90a0]" aria-label="Previous"><svg class="size-3" viewBox="0 0 12 12"><path d="M9 0v12L2 6z" fill="#8486a0"/></svg></button>
            <button class="w-[24px] grid place-items-center border-r border-[#8e90a0]" aria-label="Next"><svg class="size-3" viewBox="0 0 12 12"><path d="M3 0v12l7-6z" fill="#8486a0"/></svg></button>
            <button class="w-[22px] grid place-items-center" aria-label="Last"><svg class="size-3" viewBox="0 0 12 12"><path d="M9 0h2v12H9zM1 0v12l7-6z" fill="#8486a0"/></svg></button>
        </div>
        <button class="w-[81px] border-x-2 border-[#55576a] bg-[#d9dae6] font-bold">Model</button>
        <button class="w-[149px] pr-5 border-r-2 border-b-2 border-[#707282] bg-[#b9bbca]">Motion Study 1</button>
    </nav>

    <!-- Status bar -->
    <footer class="h-[30px] shrink-0 flex items-center pt-px pl-[3px] pr-[20px] border-b-2 border-[#777988] bg-linear-to-b from-[#d6d7e4] to-[#b8bacb] text-[16px] leading-6 text-[#2b2c3c]">
        <p class="flex-1">Click center and then a corner</p>
        <span class="w-[94px]">-0.008in</span>
        <span class="w-[75px]">1.534in</span>
        <span class="w-[55px]">0in</span>
        <span class="w-[136px]">Under Defined</span>
        <span class="w-[257px]">Editing Sketch3</span>
        <button aria-label="Tags"><svg class="size-6" viewBox="0 0 24 24"><path d="M14 1l7 2 1 8-10 12-10-8z" fill="#f4c82c" stroke="#6a4c08" stroke-width="1.500"/><circle cx="17" cy="6" r="2" fill="#fff" stroke="#6a4c08"/><path d="M13 8l-7 8M16 11l-6 7" stroke="#a8801c" stroke-width="1.300"/></svg></button>
    </footer>

    <script>
        // icons used by the feature tree rows
        const icons = {
            sensor: '<path d="M1 3h8l2 2h12v17H1z" fill="#f8d84c" stroke="#a07810" stroke-width="1.3"/><circle cx="13" cy="12" r="6.5" fill="#f2f6fc" stroke="#33456c" stroke-width="1.5"/><path d="M10 15l6-6" stroke="#33456c" stroke-width="1.8"/>',
            notes: '<path d="M1 2h8l2 2h12v18H1z" fill="#f8d84c" stroke="#a07810" stroke-width="1.3"/><text x="12" y="19" text-anchor="middle" font-family="Liberation Serif" font-weight="700" font-size="18" fill="#1c3ca0">A</text>',
            material: '<circle cx="5" cy="4" r="3.6" fill="#d82c2c"/><circle cx="5" cy="12" r="3.6" fill="#2c3cb4"/><circle cx="5" cy="20" r="3.6" fill="#2ca43c"/><path d="M12 4h11M12 12h11M12 20h11" stroke="#333" stroke-width="2.4"/>',
            plane: '<use href="#plane"/>',
            origin: '<path d="M9 19V3M6 19h14" stroke="#22243c" stroke-width="1.8"/><path d="M5 7l4-6 4 6zM17 15l6 4-6 4z" fill="#b01424"/><path d="M5 15l8 8M13 15l-8 8" stroke="#22243c" stroke-width="1.5"/>',
            sketch3d: '<path d="M2 14v9h10M17 23v-7h5" fill="none" stroke="#1c1cb4" stroke-width="2.4"/><svg x="0" y="2" width="24" height="20"><use href="#pencil"/></svg><text x="0" y="9" font-family="Liberation Sans" font-size="11" font-weight="700" fill="#c41c24">3D</text>',
            loft: '<path d="M8 2h8l1 9 6 8q-11 7-22 0l6-8z" fill="#f4c430" stroke="#5c4408" stroke-width="1.5"/><ellipse cx="12" cy="3" rx="4" ry="2" fill="#fff0a0" stroke="#5c4408"/>',
            planeblue: '<path d="M12 2l10 10-10 10L2 12z" fill="#4ca0ec" stroke="#1c4c94" stroke-width="1.5"/><path d="M1 1l4 4M19 19l4 4" stroke="#1c4c94" stroke-width="1.8"/>',
            sketch: '<use href="#sketch"/>'
        };

        document.querySelectorAll('#tree li').forEach(function(row) {
            const toggle = 'plus' in row.dataset
                ? '<button class="size-[13px] ml-[31px] mt-[4px] border border-[#666878] bg-[#d8d9e4] grid place-items-center relative" aria-label="Expand"><svg class="size-[9px]" viewBox="0 0 9 9"><path d="M1 4h7v1H1zM4 1h1v7H4z" fill="#222" stroke="#222" stroke-width=".5"/></svg></button><span class="w-[10px] h-px mt-[10px] bg-[#74768a]"></span>'
                : '<span class="w-[16px] h-px ml-[38px] mt-[9px] bg-[#74768a]"></span>';
            row.insertAdjacentHTML('afterbegin', toggle +
                `<svg class="size-6 -mt-1 mr-[5px] overflow-visible" viewBox="0 0 24 24">${icons[row.dataset.icon]}</svg>`);
        });

        // four corner points, X and Y each
        const params = document.getElementById('params');
        for (let i = 1; i <= 4; i++) {
            let html = '';
            for (const axis of ['X', 'Y']) {
                html += `<div class="flex items-center h-[29px]">
                    <label for="${axis}${i}" class="w-[33px] h-[29px] pt-1 flex text-[13px] leading-[28px] font-bold text-[#22243c]"><span class="size-[10px] mr-[3px] ml-[2px] bg-[#dc1418]"></span>${axis}</label>
                    <input id="${axis}${i}" type="text" value="0.000" disabled class="w-[186px] h-[29px] pl-[6px] border-2 border-[#b0b1be] bg-[#e6e7f2] text-[#8c8e9a] text-[15px]">
                    <div class="ml-[6px] pt-1 flex flex-col gap-[5px] px-1 text-[#8c8e9a]">
                        <button class="h-[8px] flex items-center" aria-label="Increase ${axis}${i}"><svg class="w-[10px] h-[6px] rotate-180"><use href="#arrow"/></svg></button>
                        <button class="h-[8px] flex items-center" aria-label="Decrease ${axis}${i}"><svg class="w-[10px] h-[6px]"><use href="#arrow"/></svg></button>
                    </div>
                </div>`;
            }
            params.insertAdjacentHTML('beforeend', `<div class="flex flex-col gap-[6px]">${html}</div>`);
        }
    </script>
</body>
</html>
